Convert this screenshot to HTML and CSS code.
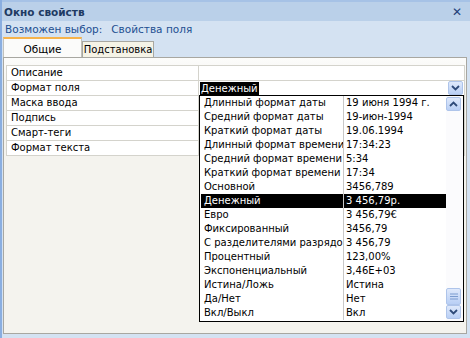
FILE: index.html
```html
<!DOCTYPE html>
<html lang="ru">
<head>
    <meta charset="UTF-8">
    <title>Окно свойств</title>
    <link rel="stylesheet" href="styles.css">
</head>
<body>
    <div class="window">
        <div class="titlebar">
            <span class="title">Окно свойств</span>
            <span class="close">✕</span>
        </div>
        <div class="subtitle">
            <span>Возможен выбор:</span>
            <span class="object">Свойства поля</span>
        </div>

        <div class="tabs">
            <div class="tab active">Общие</div>
            <div class="tab">Подстановка</div>
        </div>

        <div class="panel">
            <div class="props">
                <div class="prop-row">
                    <div class="prop-name">Описание</div>
                    <div class="prop-value"></div>
                </div>
                <div class="prop-row">
                    <div class="prop-name">Формат поля</div>
                    <div class="prop-value combo">
                        <span class="combo-text">Денежный</span>
                        <span class="scroll-btn">
                            <svg width="9" height="6" viewBox="0 0 9 6"><path d="M1 1 L4.5 4.5 L8 1" fill="none" stroke="#2e4a78" stroke-width="1.8"/></svg>
                        </span>
                    </div>
                </div>
                <div class="prop-row">
                    <div class="prop-name">Маска ввода</div>
                    <div class="prop-value"></div>
                </div>
                <div class="prop-row">
                    <div class="prop-name">Подпись</div>
                    <div class="prop-value"></div>
                </div>
                <div class="prop-row">
                    <div class="prop-name">Смарт-теги</div>
                    <div class="prop-value"></div>
                </div>
                <div class="prop-row">
                    <div class="prop-name">Формат текста</div>
                    <div class="prop-value"></div>
                </div>
            </div>

            <!-- раскрытый список форматов -->
            <div class="dropdown">
                <div class="list" id="formatList"></div>
                <div class="scrollbar">
                    <span class="scroll-btn">
                        <svg width="9" height="6" viewBox="0 0 9 6"><path d="M1 5 L4.5 1.5 L8 5" fill="none" stroke="#2e4a78" stroke-width="1.8"/></svg>
                    </span>
                    <span class="track"></span>
                    <span class="scroll-btn thumb">
                        <svg width="8" height="7" viewBox="0 0 8 7"><path d="M0 1 H8 M0 3.5 H8 M0 6 H8" stroke="#7c9ccf" stroke-width="1"/></svg>
                    </span>
                    <span class="scroll-btn">
                        <svg width="9" height="6" viewBox="0 0 9 6"><path d="M1 1 L4.5 4.5 L8 1" fill="none" stroke="#2e4a78" stroke-width="1.8"/></svg>
                    </span>
                </div>
            </div>
        </div>
    </div>

    <script>
        const formats = [
            ['Длинный формат даты', '19 июня 1994 г.'],
            ['Средний формат даты', '19-июн-1994'],
            ['Краткий формат даты', '19.06.1994'],
            ['Длинный формат времени', '17:34:23'],
            ['Средний формат времени', '5:34'],
            ['Краткий формат времени', '17:34'],
            ['Основной', '3456,789'],
            ['Денежный', '3 456,79р.'],
            ['Евро', '3 456,79€'],
            ['Фиксированный', '3456,79'],
            ['С разделителями разрядов', '3 456,79'],
            ['Процентный', '123,00%'],
            ['Экспоненциальный', '3,46E+03'],
            ['Истина/Ложь', 'Истина'],
            ['Да/Нет', 'Нет'],
            ['Вкл/Выкл', 'Вкл']
        ];

        document.getElementById('formatList').innerHTML = formats.map(f => `
            <div class="item${f[0] === 'Денежный' ? ' selected' : ''}">
                <div class="item-name">${f[0]}</div>
                <div class="item-sample">${f[1]}</div>
            </div>
        `).join('');
    </script>
</body>
</html>
```

FILE: styles.css
```css
* {
    margin: 0;
    padding: 0;
    box-sizing: border-box;
}

body {
    background: #d6e3f2;
    font-family: "DejaVu Sans", "Liberation Sans", sans-serif;
    font-size: 10px;
    color: #000;
}

.window {
    width: 470px;
    height: 338px;
    background: #d4e2f2;
    border-left: 2px solid #8aaee0;
    display: flex;
    flex-direction: column;
}

.titlebar {
    height: 21px;
    background: #bad0e9;
    border-top: 2px solid #a6c2e6;
    display: flex;
    align-items: center;
    justify-content: space-between;
    padding: 0 8px 0 2px;
}

.title {
    font-size: 10.5px;
    font-weight: bold;
    color: #1e3a63;
}

.close {
    color: #1f3f78;
    font-size: 12px;
    font-weight: bold;
}

.subtitle {
    height: 16px;
    display: flex;
    align-items: center;
    gap: 9px;
    padding-left: 3px;
    font-size: 10.5px;
    color: #1d4f91;
}

.tabs {
    height: 20px;
    display: flex;
    align-items: flex-end;
    padding-left: 1px;
}

.tab {
    height: 16px;
    width: 72px;
    background: #f5f3e6;
    border: 1px solid #a8a7a1;
    border-bottom: none;
    display: flex;
    align-items: center;
    justify-content: center;
}

.tab.active {
    height: 21px;
    width: 79px;
    background: #fbfbfa;
    border-color: #c2c1bb;
    border-top: 2px solid #f6b34c;
    position: relative;
    top: 1px;
    font-size: 10.5px;
}

.panel {
    position: relative;
    margin-left: 1px;
    width: 464px;
    height: 277px;
    background: linear-gradient(#fcfcfb, #f4f3ee 30px);
    border: 1px solid #a8a7a1;
    padding: 7px 0 0 2px;
}

.props {
    width: 459px;
    border-top: 1px solid #d4d3cc;
    border-left: 1px solid #d4d3cc;
}

.prop-row {
    display: grid;
    grid-template-columns: 192px 1fr;
    height: 15px;
    background: #fff;
}

.prop-name,
.prop-value {
    border-right: 1px solid #d4d3cc;
    border-bottom: 1px solid #d4d3cc;
    padding-left: 4px;
    line-height: 14px;
    white-space: nowrap;
    overflow: hidden;
}

.combo {
    display: flex;
    justify-content: space-between;
    padding-left: 1px;
    padding-right: 1px;
}

.combo-text {
    background: #000;
    color: #fff;
    padding: 0 1px;
    height: 13px;
    line-height: 13px;
    margin-top: 1px;
}

.scroll-btn {
    width: 15px;
    height: 14px;
    background: linear-gradient(#dfe9fb, #b9cff5);
    border: 1px solid #aec4ea;
    border-radius: 2px;
    display: flex;
    align-items: center;
    justify-content: center;
}

.dropdown {
    position: absolute;
    left: 195px;
    top: 37px;
    width: 265px;
    height: 227px;
    background: #fff;
    border: 1px solid #000;
    display: flex;
}

.list {
    flex: 1;
    padding-left: 1px;
}

.item {
    display: grid;
    grid-template-columns: 143px 1fr;
    height: 14px;
    line-height: 14px;
    white-space: nowrap;
}

.item-name {
    padding-left: 3px;
    border-right: 1px solid #c8c8c8;
    overflow: hidden;
}

.item-sample {
    padding-left: 2px;
}

.item.selected {
    background: #000;
    color: #fff;
}

.scrollbar {
    width: 17px;
    padding: 1px 1px 2px 0;
    display: flex;
    flex-direction: column;
    background: #fbfbfd;
}

.track {
    flex: 1;
}

.thumb {
    height: 17px;
}
```
